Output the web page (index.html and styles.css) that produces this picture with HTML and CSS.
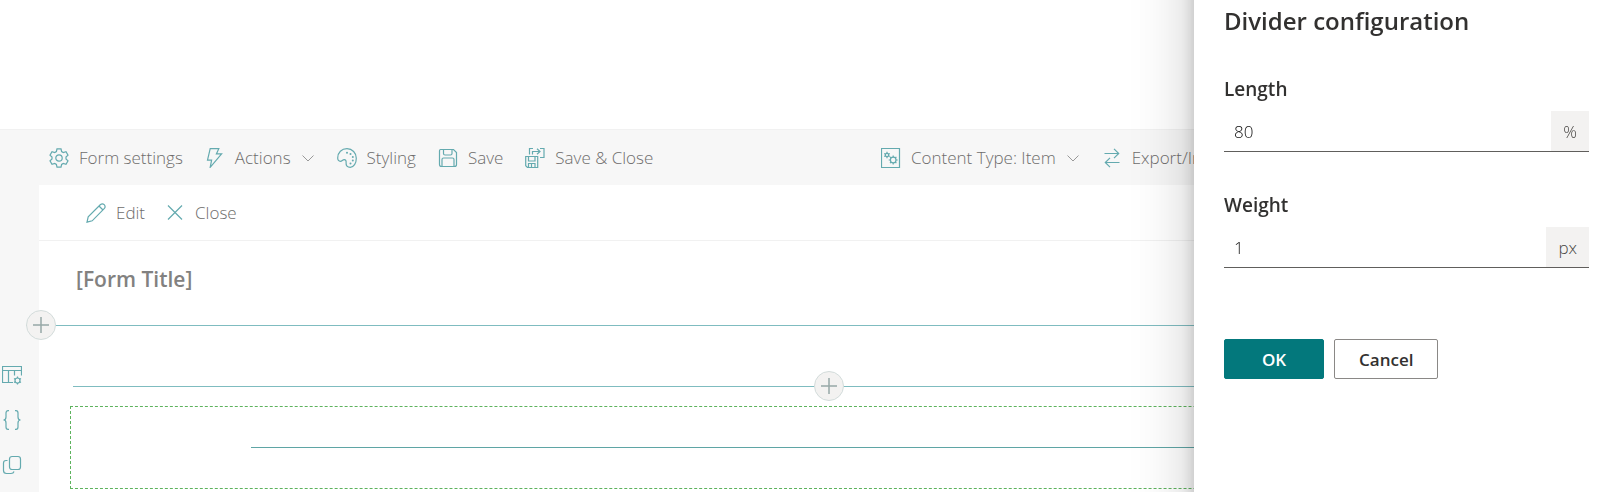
FILE: index.html
```
<!DOCTYPE html>
<html lang="en">
<head>
  <meta charset="UTF-8">
  <meta name="viewport" content="width=device-width, initial-scale=1.0">
  <title>Form designer</title>
  <link rel="stylesheet" href="styles.css">
</head>
<body>
  <header class="toolbar">
    <button class="command">
      <svg class="icon" viewBox="0 0 20 20"><path d="M8 .8h4l.6 2.7 1.7 1 2.7-.8 2 3.4-2 1.9v2l2 1.9-2 3.4-2.7-.8-1.7 1-.6 2.7H8l-.6-2.7-1.7-1-2.7.8-2-3.4L3 11V9L1 7.1l2-3.4 2.7.8 1.7-1z"/><circle cx="10" cy="10" r="3.2"/></svg>
      Form settings
    </button>
    <button class="command">
      <svg class="icon" viewBox="0 0 20 20"><path d="M5.2.7h8.600l-2.400 5.200h5.200L5.200 19.300l1.400-7.100H2.500z"/></svg>
      Actions
      <svg class="chevron" viewBox="0 0 14 20"><path d="M1.500 7.500 7 13l5.500-5.500"/></svg>
    </button>
    <button class="command">
      <svg class="icon" viewBox="0 0 20 20"><path d="M10 .7c5.300 0 9.300 4.200 9.300 9.500 0 5.200-2.600 9.100-6 9.100-3 0-4.500-1.900-4.200-4.500.2-2.100-.5-3.200-1.900-3.200-1.600 0-2.200 1.700-3.700 1.700C1.700 13.300.7 12 .7 10 .7 4.500 4.700.7 10 .7z"/><g class="dots"><circle cx="10" cy="4.800" r="1"/><circle cx="13.500" cy="6" r="1"/><circle cx="15.800" cy="9" r="1"/><circle cx="15.800" cy="12.500" r="1"/><circle cx="13.500" cy="15.500" r="1"/></g></svg>
      Styling
    </button>
    <button class="command">
      <svg class="icon" viewBox="0 0 20 20"><path d="M2.500 1.500h13l3 3v12q0 2-2 2h-13q-2 0-2-2v-13q0-2 1-2zM5.500 1.500v4q0 1.500 1.500 1.500h5.500q1.500 0 1.500-1.500v-4M4 18.500V11.500q0-1.500 1.500-1.500h9q1.500 0 1.500 1.500v7"/></svg>
      Save
    </button>
    <button class="command">
      <svg class="icon" viewBox="0 0 20 20"><path d="M.7 8.500h12v11H2.500L.7 17.700zM3.500 8.500v4.500h6.500V8.500M3.500 19.500v-4h6.500v4M6.500 16v3.500M4.500 6.500v-6H8M15 .5h4v9h-4M7.500 6.500v-3h7M12 .7l3 2.800-3 2.800"/></svg>
      Save &amp; Close
    </button>
    <div class="toolbar-far">
      <button class="command">
        <svg class="icon" viewBox="0 0 20 20"><path d="M.5.5h18v19H.5z"/><g class="cogs"><circle cx="6" cy="7" r="1.700"/><path d="M6 3.800v1.500M6 8.700v1.500M3.200 5.400l1.300.8M7.500 7.800l1.300.8M3.200 8.600l1.300-.8M7.500 6.200l1.300-.8"/><circle cx="12.200" cy="12" r="2.800"/><path d="M12.200 7.500v1.700M12.200 14.800v1.700M7.700 12h1.700M15 12h1.700M9 8.800l1.200 1.200M14.200 14l1.200 1.200M9 15.200l1.200-1.200M14.200 10l1.200-1.200"/></g></svg>
        Content Type: Item
        <svg class="chevron" viewBox="0 0 14 20"><path d="M1.500 7.500 7 13l5.500-5.500"/></svg>
      </button>
      <button class="command">
        <svg class="icon" viewBox="0 0 20 20"><path d="M2.500 5.500h14M12 .8l4.700 4.700L12 10.200M17.500 14.500h-14M8 9.800l-4.700 4.700L8 19.200"/></svg>
        Export/Import
      </button>
    </div>
  </header>

  <div class="designer">
    <nav class="rail">
      <button class="rail-button" aria-label="Form layout">
        <svg class="icon" viewBox="0 0 20 20"><path d="M11 17.500H.5v-16h19v9M.5 5.500h19M6.500 5.500v12M12.500 5.500v5"/><circle cx="15.500" cy="15.500" r="2.500"/><path d="M15.500 11.500V13M15.500 18v1.500M12 13.500l1.300.7M17.700 16.800l1.300.7M12 17.500l1.300-.7M17.700 14.200l1.300-.7"/></svg>
      </button>
      <button class="rail-button" aria-label="Variables">
        <svg class="icon" viewBox="0 0 20 20"><path d="M7 .7H6Q4 .7 4 3v4q0 3-2.500 3Q4 10 4 13v4q0 2.300 2 2.300h1M13 .7h1q2 0 2 2.300v4q0 3 2.500 3-2.500 0-2.500 3v4q0 2.300-2 2.300h-1"/></svg>
      </button>
      <button class="rail-button" aria-label="Copy">
        <svg class="icon" viewBox="0 0 20 20"><rect x="7.500" y="1.500" width="11" height="13" rx="2.500"/><path d="M5.500 5.500H4Q1.500 5.500 1.500 8v7.500q0 3 3 3H9q2.500 0 3-2"/></svg>
      </button>
    </nav>

    <main class="canvas">
      <div class="form-bar">
        <button class="command">
          <svg class="icon" viewBox="0 0 20 20"><path d="M1 19.200l1.200-5.400L14.500 1.500q2-1.500 3.700.2 1.700 1.800.2 3.700L6.200 17.800zM13 3l4 4"/></svg>
          Edit
        </button>
        <button class="command">
          <svg class="icon" viewBox="0 0 20 20"><path d="M3 2.500l14 14M17 2.500l-14 14"/></svg>
          Close
        </button>
      </div>

      <h1 class="form-title">[Form Title]</h1>

      <div class="insert insert-section">
        <button class="insert-button" aria-label="Add section"><svg viewBox="0 0 16 16"><path d="M8 0v16M0 8h16"/></svg></button>
      </div>
      <div class="insert insert-control">
        <button class="insert-button" aria-label="Add control"><svg viewBox="0 0 16 16"><path d="M8 0v16M0 8h16"/></svg></button>
      </div>

      <div class="control">
        <hr class="divider">
      </div>
    </main>
  </div>

  <aside class="panel">
    <h2 class="panel-title">Divider configuration</h2>
    <form>
      <label class="field-label" for="length">Length</label>
      <div class="field">
        <input type="text" id="length" value="80">
        <span class="suffix">%</span>
      </div>
      <label class="field-label" for="weight">Weight</label>
      <div class="field">
        <input type="text" id="weight" value="1">
        <span class="suffix">px</span>
      </div>
      <div class="panel-actions">
        <button type="button" class="button primary">OK</button>
        <button type="button" class="button">Cancel</button>
      </div>
    </form>
  </aside>
</body>
</html>
```
FILE: styles.css
```
* {
  box-sizing: border-box;
}

body {
  margin: 0;
  padding-top: 129px;
  height: 100vh;
  overflow: hidden;
  background: #fff;
  color: #323130;
  font-family: "Open Sans", "Noto Sans", sans-serif;
  font-size: 17px;
}

button,
input {
  font: inherit;
}

svg {
  fill: none;
  stroke: currentColor;
}

/* command bars */
.toolbar {
  display: flex;
  align-items: center;
  gap: 22px;
  height: 56px;
  padding-left: 49px;
  border-top: 1px solid #f1f1f1;
  background: #f7f7f7;
}

.toolbar-far {
  display: flex;
  gap: 22px;
  margin-left: auto;
  margin-right: 358px;
  width: 364px;
}

.command {
  display: flex;
  align-items: center;
  gap: 10px;
  padding: 0;
  border: none;
  background: none;
  color: #6e6d6c;
  font-weight: 300;
  line-height: 24px;
  white-space: nowrap;
  cursor: pointer;
}

.icon {
  flex: none;
  width: 20px;
  height: 20px;
  color: #64aaaf;
  stroke-width: 1.2;
}

.icon .dots {
  fill: currentColor;
  stroke: none;
}

.chevron {
  width: 14px;
  height: 20px;
  color: #999;
}

/* designer */
.designer {
  display: flex;
  height: calc(100vh - 185px);
}

.rail {
  display: flex;
  flex-direction: column;
  flex: none;
  gap: 25px;
  width: 39px;
  padding: 180px 0 0 2px;
  background: #f7f7f7;
}

.rail-button {
  display: flex;
  padding: 0;
  border: none;
  background: none;
  cursor: pointer;
}

.canvas {
  flex: 1;
  min-width: 0;
}

.form-bar {
  display: flex;
  align-items: center;
  gap: 20px;
  height: 56px;
  padding-left: 47px;
  border-bottom: 1px solid #f1f1f1;
}

.form-title {
  margin: 22px 0 15px 37px;
  color: #828180;
  font-size: 21px;
  font-weight: 600;
  line-height: 32px;
}

.insert {
  display: flex;
  align-items: center;
  height: 30px;
  background: linear-gradient(#7fbcc0, #7fbcc0) 0 15px / 100% 1px no-repeat;
}

.insert-section {
  margin: 0 0 31px -13px;
}

.insert-control {
  justify-content: center;
  margin: 0 19px 5px 34px;
}

.insert-button {
  display: flex;
  width: 30px;
  height: 30px;
  padding: 6px;
  border: 1px solid #d3dcdb;
  border-radius: 50%;
  background: #f3f2f1;
  color: #97a8a6;
  cursor: pointer;
}

.insert-button svg {
  stroke-width: 1.5;
}

.control {
  display: flex;
  align-items: center;
  height: 83px;
  margin: 0 17px 0 31px;
  padding: 0 36px;
  border: 1px dashed #5db35d;
}

.divider {
  width: 80%;
  margin: 0 auto;
  border: none;
  border-top: 1px solid #5fa5a5;
}

/* side panel, runs past the window so that its shadow stays even */
.panel {
  position: fixed;
  top: -100px;
  right: 0;
  bottom: -100px;
  width: 409px;
  padding: 104px 14px 0 30px;
  background: #fff;
  box-shadow: 0 26px 58px rgba(0, 0, 0, 0.22), 0 5px 14px rgba(0, 0, 0, 0.18);
}

.panel-title {
  margin: 0 0 37px;
  font-size: 24px;
  font-weight: 600;
  line-height: 34px;
}

.field-label {
  display: block;
  margin-bottom: 8px;
  font-size: 19px;
  font-weight: 600;
  line-height: 28px;
}

.field {
  display: flex;
  height: 41px;
  margin-bottom: 39px;
  border-bottom: 1px solid #605e5c;
}

.field input {
  flex: 1;
  min-width: 0;
  padding: 0 10px;
  border: none;
  outline: none;
  background: none;
  color: #111;
  font-weight: 300;
}

.suffix {
  display: flex;
  align-items: center;
  padding: 0 12px;
  background: #f3f2f1;
  color: #484644;
  font-weight: 300;
}

.panel-actions {
  display: flex;
  gap: 10px;
  padding-top: 32px;
}

.button {
  min-width: 100px;
  height: 40px;
  padding: 0 24px;
  border: 1px solid #8a8886;
  border-radius: 2px;
  background: #fff;
  color: #323130;
  font-weight: 600;
  cursor: pointer;
}

.button.primary {
  border-color: #03787c;
  background: #03787c;
  color: #fff;
}
```
